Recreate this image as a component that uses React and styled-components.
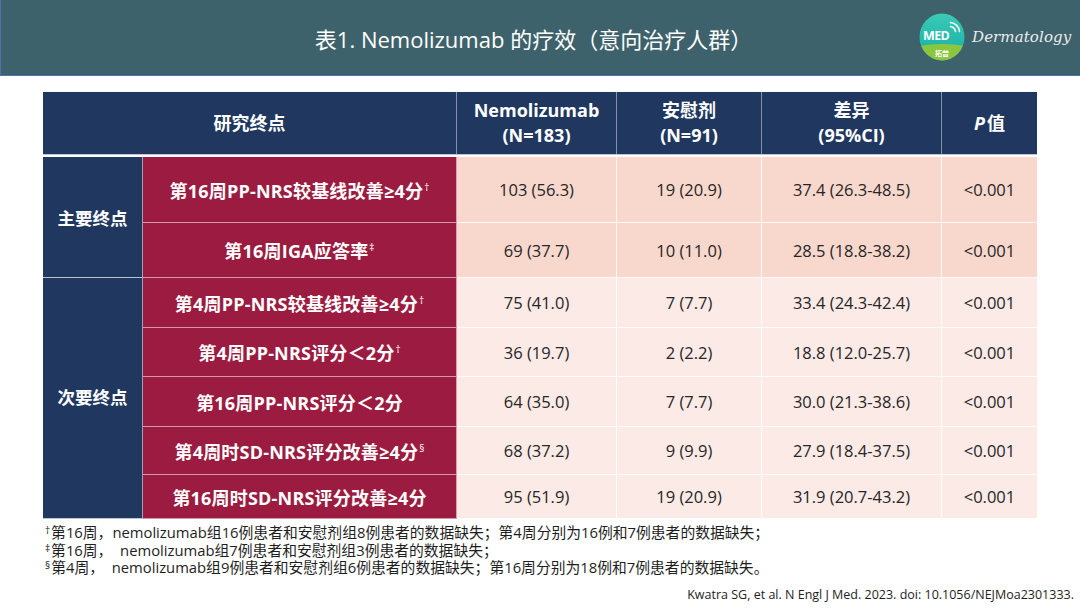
import React from "react";
import styled, { createGlobalStyle } from "styled-components";

const Global = createGlobalStyle`
  html, body { margin: 0; padding: 0; background: #fff; }
  body { font-family: "Open Sans", "Noto Sans CJK SC", sans-serif; }
  * { box-sizing: border-box; }
`;

const Page = styled.div`
  width: 1080px;
  height: 608px;
  overflow: hidden;
  display: flex;
  flex-direction: column;
  background: #fff;
`;

const TopBar = styled.header`
  height: 76px;
  flex: none;
  display: flex;
  align-items: center;
  background: #3e626b;
  border-left: 1px solid #4d74ad;
  border-bottom: 1px solid #4d74ad;
`;

const Title = styled.h1`
  flex: 1;
  margin: 0;
  padding-left: 150px;
  text-align: center;
  color: #fff;
  font-family: "Open Sans", "Noto Sans CJK SC", sans-serif;
  font-weight: 400;
  font-size: 22px;
  letter-spacing: 0;
`;

const Brand = styled.div`
  width: 164px;
  flex: none;
  display: flex;
  align-items: center;
  gap: 7px;
  padding-left: 3px;
  margin-top: -2px;
`;

const BrandName = styled.span`
  color: #ececec;
  font-family: "DejaVu Serif", "Liberation Serif", serif;
  font-style: italic;
  font-size: 15px;
  letter-spacing: 0.1px;
`;

const Logo = () => (
  <svg width="46" height="48" viewBox="0 0 46 48">
    <defs>
      <clipPath id="lc">
        <ellipse cx="23" cy="24" rx="22.5" ry="23.5" />
      </clipPath>
      <linearGradient id="lg" x1="0" y1="0" x2="0" y2="1">
        <stop offset="0" stopColor="#3ccab5" />
        <stop offset="1" stopColor="#12aea6" />
      </linearGradient>
    </defs>
    <g clipPath="url(#lc)">
      <rect x="0" y="0" width="46" height="48" fill="url(#lg)" />
      <path d="M0 33 Q23 29 46 33 L46 48 L0 48 Z" fill="#8cc63e" />
    </g>
    <text x="4" y="27" fill="#fff" fontFamily="Open Sans, sans-serif" fontWeight="700" fontSize="12.5" letterSpacing="-0.6">MED</text>
    <path d="M31.5 13.5 a6 6 0 0 1 5 5" stroke="#fff" strokeWidth="1.6" fill="none" strokeLinecap="round" />
    <path d="M31.5 9.5 a10 10 0 0 1 9 9" stroke="#fff" strokeWidth="1.6" fill="none" strokeLinecap="round" />
    <text x="23" y="43" textAnchor="middle" fill="#fff" fontFamily="Noto Sans CJK SC, sans-serif" fontWeight="700" fontSize="7">拓普</text>
  </svg>
);

const Main = styled.main`
  padding: 16px 43px 0 43px;
  display: flex;
  flex-direction: column;
  gap: 3px;
`;

const HeadGrid = styled.div`
  display: grid;
  grid-template-columns: 414px 160px 145px 180px 95px;
  height: 62px;
  background: #20375f;
  box-shadow: 0 1px 0 #bfc4d2;
`;

const HeadCell = styled.div`
  display: flex;
  flex-direction: column;
  align-items: center;
  justify-content: center;
  color: #fff;
  font-weight: 700;
  font-size: 18px;
  line-height: 25px;
  text-align: center;
  border-right: ${(p) => (p.$last ? "none" : "1px solid rgba(255,255,255,0.45)")};
`;

const Italic = styled.i`
  font-style: italic;
  margin-right: 2px;
`;

const BodyGrid = styled.div`
  display: grid;
  grid-template-columns: 100px 314px 160px 145px 180px 95px;
  grid-template-rows: 66px 55px 50px 49px 50px 48px 44px;
`;

const GroupCell = styled.div`
  grid-column: 1;
  grid-row: ${(p) => p.$rows};
  background: #20375f;
  color: #fff;
  font-weight: 700;
  font-size: 17.5px;
  display: flex;
  align-items: center;
  justify-content: center;
  border-right: 1px solid rgba(255, 255, 255, 0.55);
  border-bottom: 1px solid rgba(255, 255, 255, 0.7);
  padding-bottom: ${(p) => p.$shift || 0}px;
`;

const LabelCell = styled.div`
  background: #9b1c40;
  color: #fff;
  font-weight: 700;
  font-size: 18px;
  letter-spacing: 0.2px;
  display: flex;
  align-items: center;
  justify-content: center;
  border-right: 1px solid rgba(255, 255, 255, 0.6);
  border-bottom: 1px solid rgba(255, 255, 255, 0.55);
  white-space: nowrap;
`;

const DataCell = styled.div`
  background: ${(p) => (p.$primary ? "#f8d7cc" : "#fbeae6")};
  color: #262626;
  font-size: 16.5px;
  display: flex;
  align-items: center;
  justify-content: center;
  border-right: ${(p) => (p.$last ? "none" : "1px solid rgba(255,255,255,0.85)")};
  border-bottom: 1px solid rgba(255, 255, 255, 0.85);
  white-space: nowrap;
`;

const Mark = styled.sup`
  font-size: 10px;
  font-weight: 400;
  vertical-align: top;
  position: relative;
  top: -3px;
  margin-left: 1px;
  line-height: 1;
`;

const Notes = styled.section`
  padding: 5px 0 0 45px;
  color: #1e1e1e;
  font-size: 14.8px;
  line-height: 17.5px;
`;

const NoteLine = styled.div`
  white-space: nowrap;
`;

const NoteMark = styled.span`
  font-size: 10px;
  vertical-align: top;
  position: relative;
  top: -2px;
  margin-right: 1px;
`;

const Citation = styled.div`
  margin-top: 9px;
  padding-right: 6px;
  text-align: right;
  color: #1e1e1e;
  font-size: 12.5px;
`;

const rows = [
  { label: "第16周PP-NRS较基线改善≥4分", mark: "†", a: "103 (56.3)", b: "19 (20.9)", d: "37.4 (26.3-48.5)", primary: true },
  { label: "第16周IGA应答率", mark: "‡", a: "69 (37.7)", b: "10 (11.0)", d: "28.5 (18.8-38.2)", primary: true },
  { label: "第4周PP-NRS较基线改善≥4分", mark: "†", a: "75 (41.0)", b: "7 (7.7)", d: "33.4 (24.3-42.4)" },
  { label: "第4周PP-NRS评分＜2分", mark: "†", a: "36 (19.7)", b: "2 (2.2)", d: "18.8 (12.0-25.7)" },
  { label: "第16周PP-NRS评分＜2分", a: "64 (35.0)", b: "7 (7.7)", d: "30.0 (21.3-38.6)" },
  { label: "第4周时SD-NRS评分改善≥4分", mark: "§", a: "68 (37.2)", b: "9 (9.9)", d: "27.9 (18.4-37.5)" },
  { label: "第16周时SD-NRS评分改善≥4分", a: "95 (51.9)", b: "19 (20.9)", d: "31.9 (20.7-43.2)" },
];

export default function App() {
  return (
    <Page>
      <Global />
      <TopBar>
        <Title>表1. Nemolizumab 的疗效（意向治疗人群）</Title>
        <Brand>
          <Logo />
          <BrandName>Dermatology</BrandName>
        </Brand>
      </TopBar>
      <Main>
        <HeadGrid>
          <HeadCell>研究终点</HeadCell>
          <HeadCell>
            <span>Nemolizumab</span>
            <span>(N=183)</span>
          </HeadCell>
          <HeadCell>
            <span>安慰剂</span>
            <span>(N=91)</span>
          </HeadCell>
          <HeadCell>
            <span>差异</span>
            <span>(95%CI)</span>
          </HeadCell>
          <HeadCell $last>
            <span>
              <Italic>P</Italic>值
            </span>
          </HeadCell>
        </HeadGrid>
        <BodyGrid>
          <GroupCell $rows="1 / span 2">主要终点</GroupCell>
          <GroupCell $rows="3 / span 5" $shift={4}>次要终点</GroupCell>
          {rows.map((r, i) => (
            <React.Fragment key={i}>
              <LabelCell style={{ gridColumn: 2, gridRow: i + 1 }}>
                {r.label}
                {r.mark && <Mark>{r.mark}</Mark>}
              </LabelCell>
              <DataCell $primary={r.primary}>{r.a}</DataCell>
              <DataCell $primary={r.primary}>{r.b}</DataCell>
              <DataCell $primary={r.primary}>{r.d}</DataCell>
              <DataCell $primary={r.primary} $last>&lt;0.001</DataCell>
            </React.Fragment>
          ))}
        </BodyGrid>
      </Main>
      <Notes>
        <NoteLine>
          <NoteMark>†</NoteMark>第16周，nemolizumab组16例患者和安慰剂组8例患者的数据缺失；第4周分别为16例和7例患者的数据缺失；
        </NoteLine>
        <NoteLine>
          <NoteMark>‡</NoteMark>第16周，&nbsp;&nbsp;nemolizumab组7例患者和安慰剂组3例患者的数据缺失；
        </NoteLine>
        <NoteLine>
          <NoteMark>§</NoteMark>第4周，&nbsp;&nbsp;nemolizumab组9例患者和安慰剂组6例患者的数据缺失；第16周分别为18例和7例患者的数据缺失。
        </NoteLine>
        <Citation>Kwatra SG, et al. N Engl J Med. 2023. doi: 10.1056/NEJMoa2301333.</Citation>
      </Notes>
    </Page>
  );
}
